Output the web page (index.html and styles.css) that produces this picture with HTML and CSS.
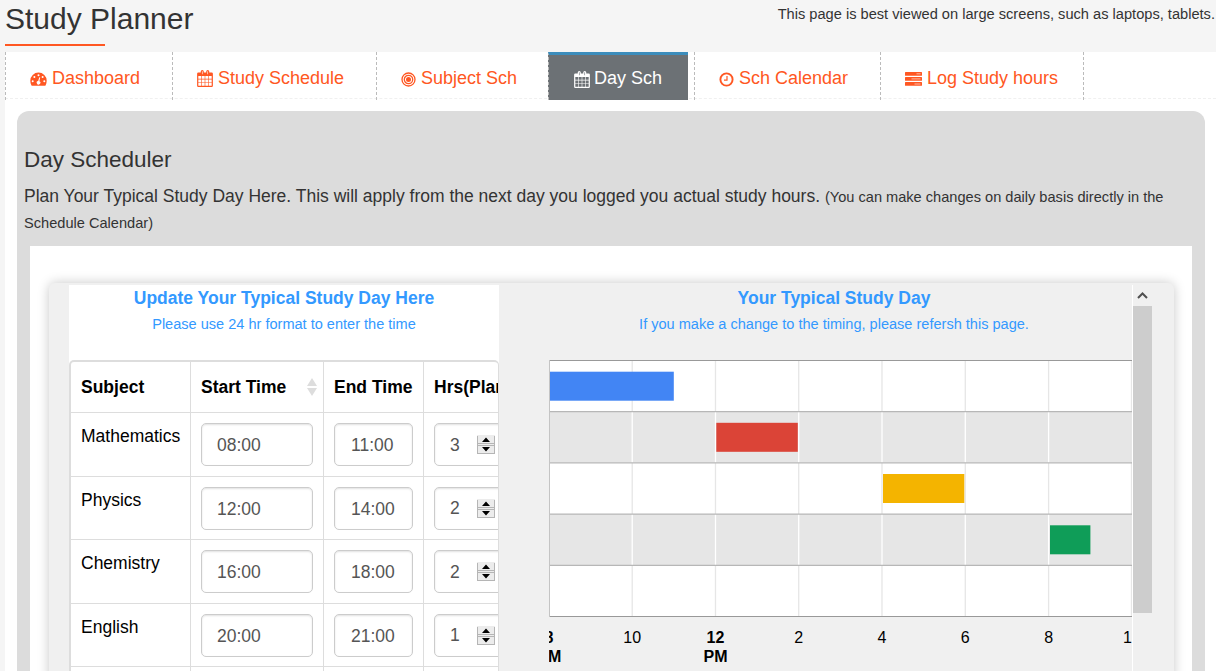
FILE: index.html
```html
<!DOCTYPE html>
<html lang="en">
<head>
<meta charset="utf-8">
<title>Study Planner</title>
<link rel="stylesheet" href="styles.css">
</head>
<body>
<svg class="defs" width="0" height="0">
  <symbol id="calendar" viewBox="0 0 1664 1792">
    <path fill-rule="evenodd" d="M128 256H384V160a160 160 0 0 1 160-160 160 160 0 0 1 160 160V256H960V160a160 160 0 0 1 160-160 160 160 0 0 1 160 160V256H1536a128 128 0 0 1 128 128V1664a128 128 0 0 1-128 128H128A128 128 0 0 1 0 1664V384A128 128 0 0 1 128 256zM128 1664h288v-288H128zM480 1664h320v-288H480zM864 1664h320v-288H864zM1248 1664h288v-288h-288zM128 1312h288V992H128zM480 1312h320V992H480zM864 1312h320V992H864zM1248 1312h288V992h-288zM128 928h288V640H128zM480 928h320V640H480zM864 928h320V640H864zM1248 928h288V640h-288zM512 128V448H576V128zM1088 128V448H1152V128z"/>
  </symbol>
  <symbol id="spinner" viewBox="0 0 18 19">
    <rect width="18" height="19" fill="#ececec"/>
    <path d="M.5 1v17M17.500 1v17M0 8.500h18M0 10.500h18M0 18.500h18" stroke="#b5b5b5"/>
    <path d="M9 2.500l4 4.500H5zM9 16.500l4-4.500H5z" fill="#000"/>
  </symbol>
</svg>

<header class="page-head">
  <h1 class="page-title">Study Planner</h1>
  <p class="page-note">This page is best viewed on large screens, such as laptops, tablets.</p>
</header>

<main class="content">
  <nav class="tabs">
    <a class="tab tab-dashboard"><svg class="icon" width="17" height="14" viewBox="0 0 17 14"><path fill="currentColor" d="M8.5 .5A8.200 8.200 0 0 0 .3 8.700c0 1.800.4 3.300 1.200 4.800.1.200.3.300.6.300h12.800c.3 0 .5-.1.6-.3.8-1.500 1.200-3 1.200-4.800A8.200 8.200 0 0 0 8.500.5z"/><g fill="#fff"><circle cx="2.700" cy="9.200" r="1"/><circle cx="4.400" cy="5.100" r="1"/><circle cx="8.500" cy="3.200" r="1"/><circle cx="12.600" cy="5.100" r="1"/><circle cx="14.300" cy="9.200" r="1"/><path d="M9.300 5.300l.9.200-.8 3.700a1.800 1.800 0 1 1-1.200-.200z"/></g></svg><span>Dashboard</span></a>
    <a class="tab tab-schedule"><svg class="icon icon-calendar" width="16" height="17" fill="currentColor"><use href="#calendar"/></svg><span>Study Schedule</span></a>
    <a class="tab tab-subject"><svg class="icon" width="15" height="15" viewBox="0 0 15 15"><g fill="none" stroke="currentColor"><circle cx="7.500" cy="7.500" r="6.500" stroke-width="1.300"/><circle cx="7.500" cy="7.500" r="4.200" stroke-width="1.300"/></g><circle cx="7.500" cy="7.500" r="2.500" fill="currentColor"/></svg><span>Subject Sch</span></a>
    <a class="tab tab-day active"><svg class="icon icon-calendar" width="16" height="17" fill="currentColor"><use href="#calendar"/></svg><span>Day Sch</span></a>
    <a class="tab tab-calendar"><svg class="icon" width="15" height="15" viewBox="0 0 15 15"><g fill="none" stroke="currentColor"><circle cx="7.500" cy="7.500" r="6.100" stroke-width="1.900"/><path d="M8 4.100v4H5" stroke-width="1.200"/></g></svg><span>Sch Calendar</span></a>
    <a class="tab tab-log"><svg class="icon" width="17" height="14" viewBox="0 0 17 14"><rect width="17" height="3.800" rx=".5" fill="currentColor"/><rect y="5" width="17" height="3.800" rx=".5" fill="currentColor"/><rect y="10" width="17" height="3.800" rx=".5" fill="currentColor"/><path d="M11.500 1.800h4M6.500 6.900h9M9.500 12h6" stroke="#ffb8a4"/></svg><span>Log Study hours</span></a>
  </nav>

  <section class="scheduler">
    <h2 class="section-title">Day Scheduler</h2>
    <p class="intro">Plan Your Typical Study Day Here. This will apply from the next day you logged you actual study hours. <small class="hint">(You can make changes on daily basis directly in the Schedule Calendar)</small></p>

    <div class="card">
      <div class="panel">
        <section class="update">
          <h3 class="pane-title">Update Your Typical Study Day Here</h3>
          <p class="pane-note">Please use 24 hr format to enter the time</p>
          <div class="table">
            <div class="row head"><div class="cell">Subject</div><div class="cell sortable">Start Time<svg width="10" height="18" viewBox="0 0 10 18" fill="#ddd"><path d="M5 0l5 8H0zM5 18l5-8H0z"/></svg></div><div class="cell">End Time</div><div class="cell">Hrs(Planned)</div></div>
            <div class="row"><div class="cell">Mathematics</div><div class="cell"><div class="field">08:00</div></div><div class="cell"><div class="field end">11:00</div></div><div class="cell"><div class="field number">3<svg width="18" height="19"><use href="#spinner"/></svg></div></div></div>
            <div class="row"><div class="cell">Physics</div><div class="cell"><div class="field">12:00</div></div><div class="cell"><div class="field end">14:00</div></div><div class="cell"><div class="field number">2<svg width="18" height="19"><use href="#spinner"/></svg></div></div></div>
            <div class="row"><div class="cell">Chemistry</div><div class="cell"><div class="field">16:00</div></div><div class="cell"><div class="field end">18:00</div></div><div class="cell"><div class="field number">2<svg width="18" height="19"><use href="#spinner"/></svg></div></div></div>
            <div class="row"><div class="cell">English</div><div class="cell"><div class="field">20:00</div></div><div class="cell"><div class="field end">21:00</div></div><div class="cell"><div class="field number">1<svg width="18" height="19"><use href="#spinner"/></svg></div></div></div>
            <div class="row"><div class="cell"></div><div class="cell"></div><div class="cell"></div><div class="cell"></div></div>
          </div>
        </section>

        <section class="day">
          <h3 class="pane-title">Your Typical Study Day</h3>
          <p class="pane-note">If you make a change to the timing, please refersh this page.</p>
          <svg class="chart" width="583" height="311" viewBox="0 0 583 311">
            <rect width="583" height="257" fill="#fff"/>
            <path fill="#e6e6e6" d="M0 51.500h583v51H0zM0 154h583v51H0z"/>
            <path stroke="#e6e6e6" stroke-width="1.300" d="M83.200 0v256M166.500 0v256M249.700 0v256M333 0v256M416.300 0v256M499.600 0v256M582.500 0v256"/>
            <path stroke="#fff" stroke-width="1.300" d="M83.200 52v51M166.500 52v51M249.700 52v51M333 52v51M416.300 52v51M499.600 52v51M83.200 154v51M166.500 154v51M249.700 154v51M333 154v51M416.300 154v51M499.600 154v51"/>
            <path stroke="#b7b7b7" stroke-width="1.200" d="M0 51.600h583M0 102.800h583M0 154.100h583M0 205.400h583"/>
            <path stroke="#999" d="M0 .5h583M0 256.500h583"/>
            <path stroke="#c4c4c4" d="M.5 0v257"/>
            <rect x="1" y="11.700" width="123.800" height="29" fill="#4285f4"/>
            <rect x="167.300" y="62.800" width="81.500" height="29" fill="#db4437"/>
            <rect x="334" y="114" width="81.300" height="29" fill="#f4b400"/>
            <rect x="501" y="165.300" width="40.400" height="29" fill="#0f9d58"/>
            <g class="ticks" text-anchor="middle">
              <g font-weight="bold"><text x="0" y="283">8</text><text x="0" y="302">AM</text><text x="166.500" y="283">12</text><text x="166.500" y="302">PM</text></g>
              <text x="83.200" y="283">10</text><text x="249.700" y="283">2</text><text x="333" y="283">4</text><text x="416.300" y="283">6</text><text x="499.600" y="283">8</text><text x="583" y="283">10</text>
            </g>
          </svg>
        </section>
        <div class="scrollbar"><svg class="scroll-up" width="11" height="8" viewBox="0 0 11 8"><path d="M1 7l4.500-4.500L10 7" fill="none" stroke="#505050" stroke-width="2"/></svg><div class="thumb"></div></div>
      </div>
    </div>
  </section>
</main>
</body>
</html>
```

FILE: styles.css
```css
* { box-sizing: border-box; }
body {
  margin: 0;
  height: 671px;
  overflow: hidden;
  background: #f5f5f5;
  color: #333;
  font: 17.5px/24px "Liberation Sans", Arial, sans-serif;
}
h1, h2, h3, p { margin: 0; font-weight: normal; }
.defs { position: absolute; }

.page-head { display: flex; justify-content: space-between; height: 52px; padding: 0 1px 0 5px; }
.page-title { font-size: 30px; line-height: 38px; height: 46px; }
.page-title::after { content: ""; display: block; width: 100px; height: 2px; margin-top: 6px; background: #ff5722; }
.page-note { font-size: 14.63px; line-height: 28px; white-space: nowrap; }

.content { margin-left: 5px; background: #fff; height: 619px; }
.tabs { display: flex; height: 47px; border-bottom: 1px dashed #f0f0f0; }
.tab {
  display: flex;
  gap: 5px;
  height: 48px;
  padding-left: 24px;
  border-left: 1px dashed #bbb;
  color: #ff5722;
  font-size: 18px;
  line-height: 52px;
  white-space: nowrap;
}
.icon { flex: none; margin-top: 20px; }
.icon-calendar { margin-top: 18px; }
.tab-dashboard { width: 167px; }
.tab-schedule { width: 204px; }
.tab-subject { width: 172px; }
.tab-day { width: 140px; margin-right: 6px; }
.tab-calendar { width: 186px; }
.tab-log { width: 204px; border-right: 1px dashed #bbb; }
.tab.active { padding-left: 25px; background: #6c7175; border-top: 3px solid #3c8dbc; color: #fff; line-height: 46px; }
.active .icon { margin-top: 16px; }
.tab.active { gap: 4px; }

.scheduler { margin: 12px 11px 0 12px; padding: 36px 13px 0; height: 560px; background: #dcdcdc; border-radius: 12px 12px 0 0; }
.section-title { margin-left: -6px; font-size: 22.5px; line-height: 26px; }
.intro { margin: 11px -6px 0; height: 62px; line-height: 25px; }
.hint { font-size: 14.6px; }
.card { height: 425px; padding: 37px 18px 0 19px; background: #fff; }
.panel { display: flex; height: 400px; padding: 2px 22px 0 20px; background: #f0f0f0; border-radius: 6px; box-shadow: 0 0 12px rgba(0, 0, 0, .22); }
.update { flex: none; width: 430px; background: #fff; overflow: hidden; }
.day { flex: none; width: 633px; padding-left: 50px; }
.pane-title { font-size: 17.5px; font-weight: bold; line-height: 26px; text-align: center; color: #3399ff; }
.pane-note { height: 49px; font-size: 14.55px; line-height: 26px; text-align: center; color: #3399ff; }
.day .pane-title, .day .pane-note { margin-right: 13px; }

.table { width: 430px; overflow: hidden; border: solid #ddd; border-width: 2px 1px 0 2px; border-radius: 5px 5px 0 0; color: #000; }
.row { display: grid; grid-template-columns: 120px 133px 100px 140px; width: 493px; height: 63.500px; border-bottom: 1px solid #ddd; }
.head { height: 51px; font-weight: bold; }
.cell { padding: 10px; border-right: 1px solid #ddd; white-space: nowrap; line-height: 26px; }
.head .cell { line-height: 30px; }
.sortable { display: flex; justify-content: space-between; align-items: center; padding-right: 6px; }
.field { height: 43px; padding-left: 15px; border: 1px solid #ccc; border-radius: 5px; box-shadow: inset 0 1px 2px rgba(0, 0, 0, .12); color: #555; line-height: 42px; }
.end { padding-left: 16px; }
.number { display: flex; align-items: center; gap: 17px; }

.chart { display: block; overflow: hidden; }
.ticks { font-size: 16px; fill: #000; }
.scrollbar { flex: none; width: 20px; border-left: 1px solid #fff; }
.scroll-up { display: block; margin: 6px 4px 7px; }
.thumb { width: 19px; height: 307px; background: #cdcdcd; }
```
